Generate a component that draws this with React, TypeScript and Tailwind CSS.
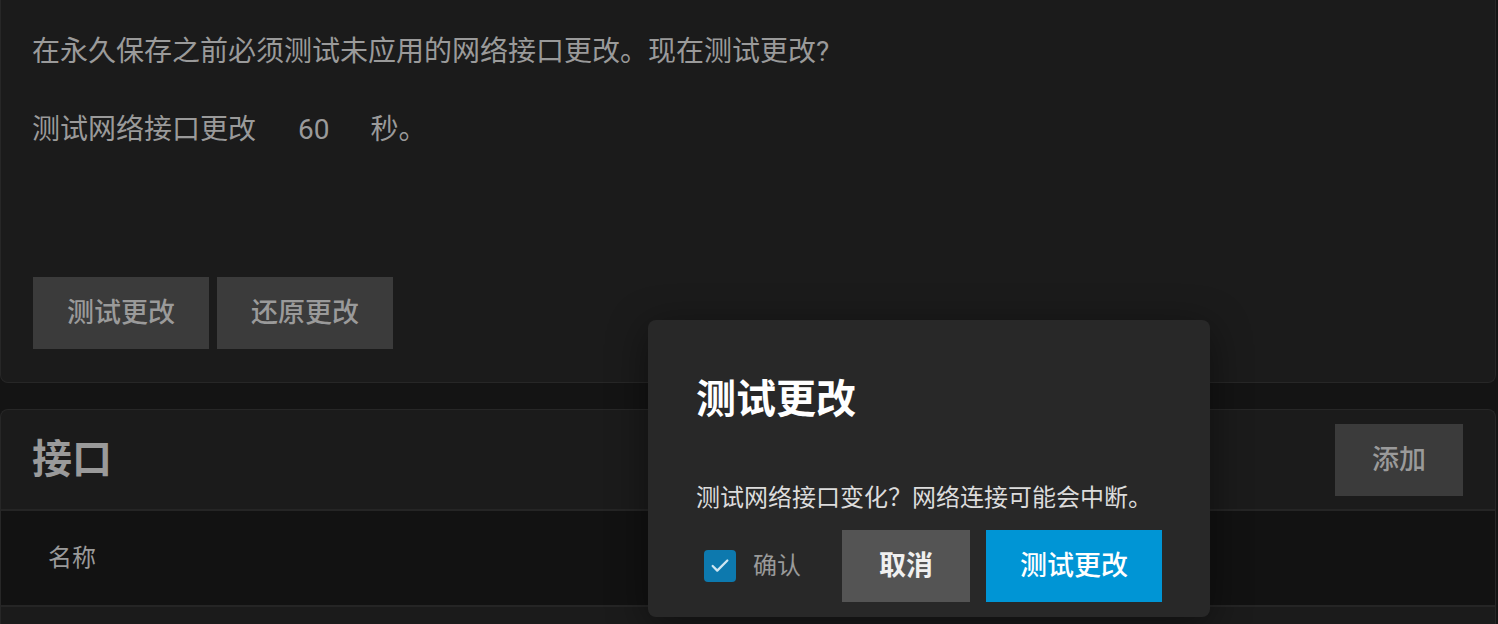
import { Check } from "lucide-react";

const font = { fontFamily: 'Roboto, "Noto Sans CJK SC", sans-serif' };

function GrayButton({ label, className = "" }: { label: string; className?: string }) {
  return (
    <button
      className={`h-[72px] bg-[#3b3b3b] text-[27px] font-medium text-[#9a9a9a] ${className}`}
    >
      {label}
    </button>
  );
}

export default function App() {
  return (
    <div className="relative h-[624px] w-[1498px] overflow-hidden bg-[#141414]" style={font}>
      <div className="flex flex-col gap-[26px] pr-[2px]">
        {/* pending changes card */}
        <section className="h-[383px] rounded-b-lg border-x border-b border-[#272727] bg-[#1b1b1b] px-[31px] pt-[33px]">
          <p className="text-[28px] leading-[38px] text-[#9a9a9a]">
            在永久保存之前必须测试未应用的网络接口更改。现在测试更改?
          </p>
          <p className="mt-[40px] flex text-[28px] leading-[38px] text-[#9a9a9a]">
            <span>测试网络接口更改</span>
            <span className="ml-[42px]">60</span>
            <span className="ml-[41px]">秒。</span>
          </p>
          <div className="mt-[128px] flex gap-2 pl-px">
            <GrayButton label="测试更改" className="w-[176px]" />
            <GrayButton label="还原更改" className="w-[176px]" />
          </div>
        </section>

        {/* interfaces card */}
        <section className="rounded-t-lg border-x border-t border-[#272727] bg-[#1b1b1b]">
          <div className="flex h-[101px] items-center justify-between border-b-2 border-[#252525] pl-[31px] pr-[32px]">
            <h2 className="text-[40px] font-bold text-[#9a9a9a]">接口</h2>
            <GrayButton label="添加" className="mt-[1px] w-[128px]" />
          </div>
          <div className="flex h-[96px] items-center border-b-2 border-[#252525] bg-[#121212] pl-[47px]">
            <span className="text-[24px] text-[#9a9a9a]">名称</span>
          </div>
          <div className="h-[40px]" />
        </section>
      </div>

      {/* dialog */}
      <div className="absolute left-[648px] top-[320px] flex h-[297px] w-[562px] flex-col rounded-lg bg-[#282828] px-[48px] shadow-[0_8px_40px_rgba(0,0,0,0.45)]">
        <h3 className="mt-[54px] text-[40px] font-bold leading-[52px] text-white">测试更改</h3>
        <p className="mt-[55px] text-[24px] leading-[34px] text-[#dcdcdc]">
          测试网络接口变化？网络连接可能会中断。
        </p>
        <div className="mt-[15px] flex items-center">
          <label className="ml-[8px] flex items-center gap-[17px]">
            <span className="flex h-[32px] w-[32px] items-center justify-center rounded-[4px] bg-[#0d79ae]">
              <Check className="h-[22px] w-[22px] text-[#cfe6f2]" strokeWidth={2.5} />
            </span>
            <span className="text-[24px] text-[#9a9a9a]">确认</span>
          </label>
          <button className="ml-[41px] h-[72px] w-[128px] bg-[#545454] text-[27px] font-bold text-[#f0f0f0]">
            取消
          </button>
          <button className="ml-[16px] h-[72px] w-[176px] bg-[#0095d5] text-[27px] font-medium text-white">
            测试更改
          </button>
        </div>
      </div>
    </div>
  );
}
